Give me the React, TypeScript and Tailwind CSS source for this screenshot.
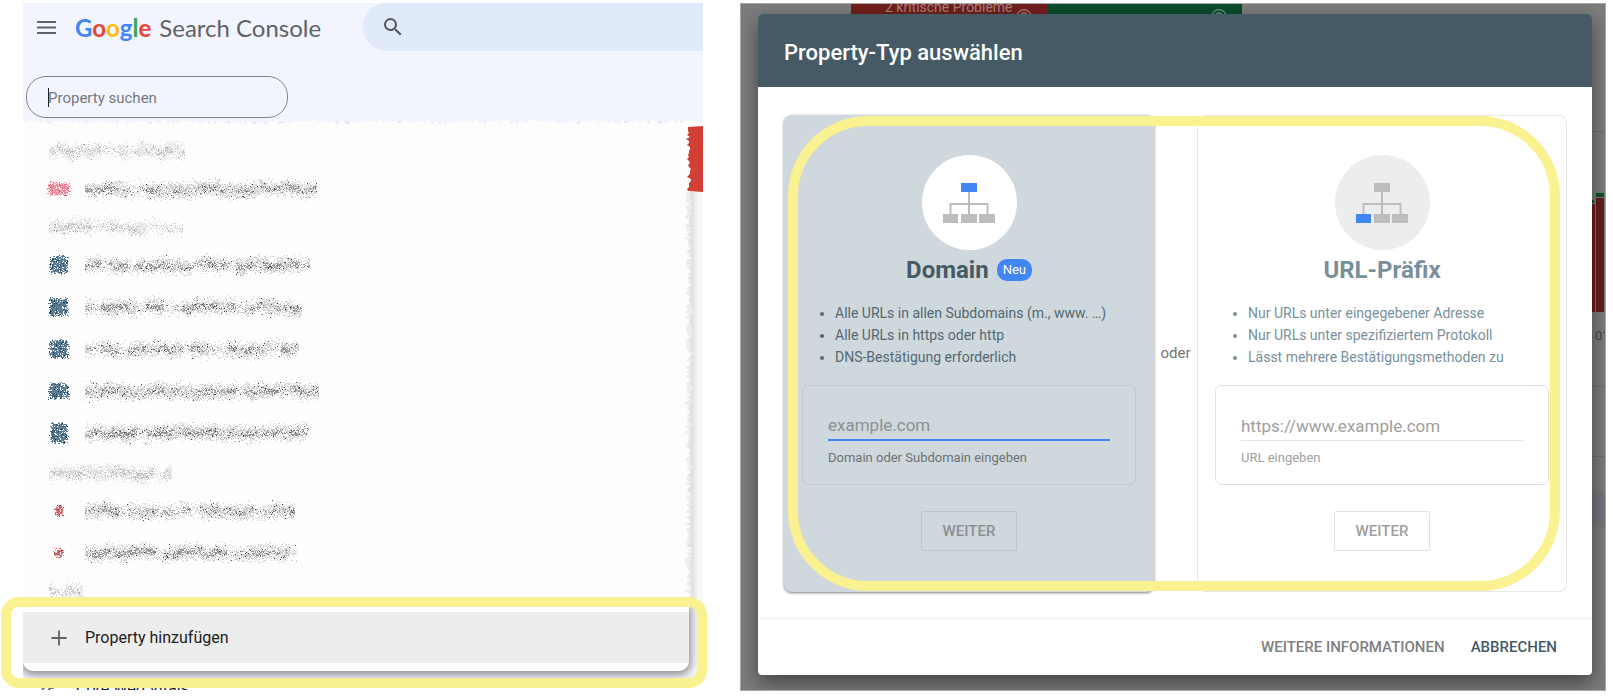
import React from 'react'
import { clsx } from 'clsx'

// ── Grain drawing helpers ──────────────────────────────────────────────────

const makeRandom = (seed: number) => {
  let s = seed * 7919 + 13
  return () => {
    s = (s * 1664525 + 1013904223) % 4294967296
    return s / 4294967296
  }
}

interface SmudgeProps {
  width: number
  seed: number
  tones: string[]
}

// Grainy stroke that covers a line of text
const Smudge: React.FC<SmudgeProps> = ({ width, seed, tones }) => {
  const rnd = makeRandom(seed)
  const paths = tones.map(() => '')
  let drift = 0
  let target = 0
  let weight = 0.8
  let dark = 0.5
  for (let x = 2; x < width - 2; x++) {
    if (x % 9 === 0) {
      target = (rnd() - 0.5) * 6
      weight = rnd() < 0.15 ? 0.3 : 0.7 + rnd() * 0.5
      dark = rnd()
    }
    drift += (target - drift) * 0.2
    const count = Math.round(13 * weight)
    for (let i = 0; i < count; i++) {
      const spread = (rnd() + rnd() + rnd() - 1.5) * 8
      const y = Math.round(12 + drift + spread)
      const near = Math.abs(spread) < 3
      const roll = rnd()
      const tone = roll > 0.97 ? 2 : near && roll < dark * 0.7 ? 1 : 0
      paths[tone] += `M${x} ${y}h1v1h-1z`
    }
  }
  return (
    <svg width={width} height={24} viewBox={`0 0 ${width} 24`} className="shrink-0" aria-hidden="true">
      {paths.map((d, i) => <path key={i} d={d} fill={tones[i]} />)}
    </svg>
  )
}

interface BlotProps {
  width: number
  height: number
  seed: number
  tones: string[]
}

// Grainy favicon
const Blot: React.FC<BlotProps> = ({ width, height, seed, tones }) => {
  const rnd = makeRandom(seed)
  const paths = tones.map(() => '')
  for (let i = 0; i < width * height * 2; i++) {
    const x = Math.round(11.5 + (rnd() - 0.5) * width + (rnd() - 0.5) * 4)
    const y = Math.round(11.5 + (rnd() - 0.5) * height + (rnd() - 0.5) * 4)
    const roll = rnd()
    paths[roll < 0.25 ? 0 : roll < 0.8 ? 1 : 2] += `M${x} ${y}h1v1h-1z`
  }
  return (
    <svg width={24} height={24} viewBox="0 0 24 24" className="shrink-0" aria-hidden="true">
      {[0, 2, 1].map(i => <path key={i} d={paths[i]} fill={tones[i]} />)}
    </svg>
  )
}

const raggedPoints = (seed: number, length: number, depth: number) => {
  const rnd = makeRandom(seed)
  const pts: [number, number][] = []
  for (let p = 0; p <= length; p += 2) pts.push([p, Math.round(rnd() * depth)])
  return pts
}

const TornTop = () => (
  <svg className="absolute left-0 -top-1 w-full h-2" viewBox="0 0 680 8" preserveAspectRatio="none" aria-hidden="true">
    <polygon points={`0,8 ${raggedPoints(5, 680, 3).map(([x, y]) => `${x},${y + 3}`).join(' ')} 680,8`} fill="#e3e5ee" />
    <polygon points={`0,8 ${raggedPoints(8, 680, 4).map(([x, y]) => `${x},${y + 2}`).join(' ')} 680,8`} fill="#fdfdfd" />
  </svg>
)

const TornSide = () => (
  <svg width={20} height={482} viewBox="0 0 20 482" className="shrink-0 bg-[#fdfdfd]" aria-hidden="true">
    <rect x={9} y={70} width={11} height={414} fill="#f8f8f8" />
    <polygon points={`14,70 ${raggedPoints(31, 414, 6).map(([y, x]) => `${x + 2},${y + 70}`).join(' ')} 14,484`} fill="#ededed" />
    <polygon points={`11,70 ${raggedPoints(77, 414, 5).map(([y, x]) => `${x + 5},${y + 70}`).join(' ')} 11,484`} fill="#e2e2e2" />
    <polygon points={`20,4 ${raggedPoints(3, 64, 5).map(([y, x]) => `${x + 3},${y + 5}`).join(' ')} 20,70`} fill="#d23f35" />
  </svg>
)

// ── Property list ──────────────────────────────────────────────────────────

const HEADING_TONES = ['#e2e2e2', '#c6c6c6', '#a2a2a2']
const TEXT_TONES = ['#d0d0d0', '#969696', '#4a4a4a']
const PINK_TONES = ['#f8c3cc', '#f08ba0', '#d8556e']
const BLUE_TONES = ['#8aa2b5', '#58788f', '#1d4564']
const RED_TONES = ['#eda5a5', '#d9666c', '#a33a40']

const GROUPS = [
  { heading: 140, items: [{ text: 236, width: 20, height: 11, tones: PINK_TONES }] },
  {
    heading: 138,
    items: [
      { text: 229, width: 16, height: 15, tones: BLUE_TONES },
      { text: 221, width: 17, height: 16, tones: BLUE_TONES },
      { text: 218, width: 17, height: 16, tones: BLUE_TONES },
      { text: 238, width: 18, height: 14, tones: BLUE_TONES },
      { text: 228, width: 15, height: 18, tones: BLUE_TONES },
    ],
  },
  {
    heading: 127,
    items: [
      { text: 214, width: 6, height: 8, tones: RED_TONES },
      { text: 216, width: 7, height: 7, tones: RED_TONES },
    ],
  },
  { heading: 38, items: [] },
]

const PropertyList = () => (
  <div className="flex-1 pt-3 pl-6 bg-[#fdfdfd]">
    {GROUPS.map((group, g) => (
      <div key={g} className={clsx(g === 2 && 'pt-0.5')}>
        <div className="flex items-center h-[34px]">
          <Smudge width={group.heading} seed={g + 40} tones={HEADING_TONES} />
        </div>
        {group.items.map((item, i) => (
          <div key={i} className="flex items-center gap-3 h-[42px]">
            <Blot width={item.width} height={item.height} seed={g * 10 + i + 1} tones={item.tones} />
            <Smudge width={item.text} seed={g * 10 + i + 60} tones={TEXT_TONES} />
          </div>
        ))}
      </div>
    ))}
  </div>
)

const GoogleLogo = () => (
  <span className="font-bold">
    <span className="text-[#4285f4]">G</span>
    <span className="text-[#ea4335]">o</span>
    <span className="text-[#fbbc05]">o</span>
    <span className="text-[#4285f4]">g</span>
    <span className="text-[#34a853]">l</span>
    <span className="text-[#ea4335]">e</span>
  </span>
)

const ConsolePanel = () => (
  <section className="relative flex flex-col">
    <header className="bg-[#f2f5fd]">
      <div className="flex h-12">
        <button type="button" aria-label="Menü" className="ml-[14px] flex items-center">
          <svg width={20} height={14} viewBox="0 0 20 14" className="mt-[2px]">
            <path d="M0 1h19M0 6.500h19M0 12h19" stroke="#5f6368" strokeWidth={1.800} />
          </svg>
        </button>
        <a href="#" className="flex flex-1 items-center gap-2 pl-[18px] pt-0.5 font-['Lato',sans-serif] text-2xl text-[#5f6368] whitespace-nowrap">
          <GoogleLogo />
          Search Console
        </a>
        <div className="flex w-1/2 items-center rounded-l-full bg-[#e0eafa] pl-[18px]">
          <svg width={24} height={24} viewBox="0 0 24 24" fill="#53575c" aria-hidden="true">
            <path d="M15.500 14h-.79l-.28-.27A6.471 6.471 0 0 0 16 9.500 6.500 6.500 0 1 0 9.500 16c1.610 0 3.090-.59 4.230-1.570l.27.28v.79l5 4.990L20.490 19l-4.990-5zm-6 0C7.010 14 5 11.990 5 9.500S7.010 5 9.500 5 14 7.010 14 9.500 11.990 14 9.500 14z" />
          </svg>
        </div>
      </div>
      <label className="relative ml-[3px] mt-[25px] mb-1 flex w-[262px] h-[42px] items-center rounded-[20px] border border-[#80858c] pl-[21px]">
        <span className="absolute left-[21px] h-[19px] w-px bg-[#202124]" />
        <input
          type="text"
          aria-label="Property suchen"
          placeholder="Property suchen"
          className="w-full bg-transparent pt-0.5 text-[15px] outline-none placeholder:text-[#75797d]"
        />
      </label>
    </header>

    <div className="relative flex h-[482px]">
      <TornTop />
      <PropertyList />
      <TornSide />
    </div>

    {/* Footer row of the drop-down */}
    <div className="relative overflow-hidden bg-[#f7f8fa] pb-[19px] pr-[14px]">
      <div className="relative z-10 rounded-b-[10px] bg-white pb-2 pt-2 shadow-[0_2px_10px_2px_rgba(60,65,80,0.6)]">
        <button type="button" className="flex h-[51px] w-full items-center gap-[18px] bg-[#ededed] pl-7 text-base text-[#212121]">
          <svg width={16} height={16} viewBox="0 0 16 16" aria-hidden="true">
            <path d="M8 .5v15M.5 8h15" stroke="#616161" strokeWidth={1.800} />
          </svg>
          Property hinzufügen
        </button>
      </div>
      <div className="absolute inset-x-0 bottom-0 z-20 flex h-[9px] gap-5 overflow-hidden bg-white pl-[17px] text-base leading-4 text-[#212121]">
        <svg width={16} height={16} viewBox="0 0 16 16" fill="none" stroke="#616161" strokeWidth={1.800} aria-hidden="true">
          <path d="M2 15a8 8 0 0 1 3-9M8 10a5 5 0 0 1 6-3" />
        </svg>
        Core Web Vitals
      </div>
    </div>

    <div className="pointer-events-none absolute -left-[22px] -right-1 bottom-[3px] z-30 h-[91px] rounded-[18px] border-10 border-[#faf190]" />
  </section>
)

// ── Property type dialog ───────────────────────────────────────────────────

const SitemapIcon = ({ active }: { active: 'root' | 'leaf' }) => (
  <svg width={52} height={40} viewBox="0 0 52 40" aria-hidden="true">
    <path d="M26 9v22M7.500 31V21h37v10" fill="none" stroke="#bdbdbd" strokeWidth={2} />
    <rect x={18} y={0} width={16} height={9} fill={active === 'root' ? '#4285f4' : '#bdbdbd'} />
    <rect x={0} y={31} width={15} height={9} fill={active === 'leaf' ? '#4285f4' : '#bdbdbd'} />
    <rect x={18} y={31} width={16} height={9} fill="#bdbdbd" />
    <rect x={36} y={31} width={16} height={9} fill="#bdbdbd" />
  </svg>
)

interface TypeCardProps {
  id: string
  title: string
  badge?: string
  points: string[]
  placeholder: string
  hint: string
  selected?: boolean
}

const TypeCard: React.FC<TypeCardProps> = ({ id, title, badge, points, placeholder, hint, selected }) => (
  <div
    className={clsx(
      'flex flex-col items-center rounded-lg px-[18px] pt-10 pb-[41px]',
      selected ? 'bg-[#cfd8dc] shadow-[0_1px_3px_rgba(0,0,0,0.5)]' : 'bg-white shadow-[inset_0_0_0_1px_#e8e8e8]',
    )}
  >
    <div className={clsx('flex size-[95px] items-center justify-center rounded-full', selected ? 'bg-white' : 'bg-[#ecedef]')}>
      <SitemapIcon active={selected ? 'root' : 'leaf'} />
    </div>

    <div className="flex h-10 items-center gap-2">
      <h2 className={clsx('text-2xl font-bold', selected ? 'text-[#455a64]' : 'text-[#78909c]')}>{title}</h2>
      {badge && <span className="rounded-[10px] bg-[#4285f4] px-1.5 text-[13px] leading-[22px] text-white">{badge}</span>}
    </div>

    <ul
      className={clsx(
        'mt-3 w-full list-disc pl-[33px] text-sm leading-[22px] whitespace-nowrap',
        selected ? 'text-[#546872]' : 'text-[#78909c]',
      )}
    >
      {points.map(point => <li key={point}>{point}</li>)}
    </ul>

    <div className={clsx('mt-[17px] h-[100px] w-full rounded-md border px-[25px] pt-[25px]', selected ? 'border-[#bfc8cc]' : 'border-[#e2e2e2]')}>
      <input
        id={id}
        type="text"
        placeholder={placeholder}
        className={clsx(
          'block h-[30px] w-full bg-transparent text-[17px] outline-none',
          selected
            ? 'border-b-2 border-[#4285f4] placeholder:text-[#8b9193]'
            : 'border-b border-[#e5e5e5] placeholder:text-[#9e9e9e]',
        )}
      />
      <label htmlFor={id} className={clsx('mt-[7px] block text-[13px] leading-5', selected ? 'text-[#6c7275]' : 'text-[#a0a0a0]')}>
        {hint}
      </label>
    </div>

    <button
      type="button"
      className={clsx(
        'mt-[26px] h-10 rounded-xs border px-[21px] text-[15px] font-medium',
        selected ? 'border-[#bcc5c9] text-[#8a9194]' : 'border-[#e2e2e2] text-[#a0a0a0]',
      )}
    >
      WEITER
    </button>
  </div>
)

const HelpRing = () => (
  <svg width={16} height={16} viewBox="0 0 16 16" fill="none" stroke="currentColor" className="absolute right-[15px] top-[5px]" aria-hidden="true">
    <circle cx={8} cy={8} r={7.300} strokeWidth={1.200} />
    <path d="M5 7a3 3 0 1 1 4.500 2.500L8 11" strokeWidth={1.300} />
  </svg>
)

// Dimmed report page that shows through at the right edge
const BackdropChart = () => (
  <svg width={14} height={687} viewBox="0 0 14 687" className="absolute right-0 top-0" aria-hidden="true">
    <path d="M0 127.500h14M0 382.500h14M0 452.500h14" stroke="#6d6d6d" />
    <rect x={0} y={487} width={14} height={36} fill="#74767b" />
    <rect x={0} y={200} width={4} height={108} fill="#641f1c" />
    <rect x={0} y={196} width={3} height={3} fill="#12502f" />
    <rect x={5} y={194} width={8} height={114} fill="#641f1c" />
    <rect x={5} y={189} width={8} height={4} fill="#12502f" />
    <text x={4} y={336} fontSize={13} fill="#444">01</text>
  </svg>
)

const DialogPanel = () => (
  <section className="relative overflow-hidden border border-[#a8a8a8] bg-[#7c7c7d] pl-[17px] pr-[13px] pt-[10px] pb-[15px]">
    <div className="absolute left-[110px] right-[363px] top-0 grid h-4 grid-cols-2">
      <div className="relative overflow-hidden bg-[#701f1c] text-center text-sm leading-3 text-[#a97f7d]">
        <div className="-mt-[5px] leading-4">2 kritische Probleme</div>
        <HelpRing />
      </div>
      <div className="relative overflow-hidden bg-[#0b4b2c] text-[#6f9580]">
        <HelpRing />
      </div>
    </div>
    <BackdropChart />

    <div role="dialog" aria-labelledby="dialog-title" className="relative rounded-sm bg-white shadow-[0_8px_20px_rgba(0,0,0,0.45)]">
      <h1 id="dialog-title" className="flex h-[73px] items-center rounded-t-sm bg-[#455a64] pl-[26px] pt-1 text-[22px] font-medium text-white">
        Property-Typ auswählen
      </h1>

      <div className="relative grid grid-cols-[1fr_43px_1fr] border-b border-[#eeeeee] pt-7 pb-[26px] pl-[26px] pr-[25px]">
        <TypeCard
          id="domain"
          title="Domain"
          badge="Neu"
          points={['Alle URLs in allen Subdomains (m., www. …)', 'Alle URLs in https oder http', 'DNS-Bestätigung erforderlich']}
          placeholder="example.com"
          hint="Domain oder Subdomain eingeben"
          selected
        />
        <div className="flex items-center justify-center text-[15px] text-[#757575]">oder</div>
        <TypeCard
          id="url-prefix"
          title="URL-Präfix"
          points={['Nur URLs unter eingegebener Adresse', 'Nur URLs unter spezifiziertem Protokoll', 'Lässt mehrere Bestätigungsmethoden zu']}
          placeholder="https://www.example.com"
          hint="URL eingeben"
        />
        <div className="pointer-events-none absolute left-[30px] right-8 top-[29px] bottom-[27px] rounded-[80px] border-10 border-[#faf190]" />
      </div>

      <div className="flex h-14 items-center justify-end gap-[26px] pr-[35px] text-[15px] font-medium">
        <a href="#" className="text-[#808080]">WEITERE INFORMATIONEN</a>
        <button type="button" className="text-[#455a64]">ABBRECHEN</button>
      </div>
    </div>
  </section>
)

export default function App() {
  return (
    <main className="grid grid-cols-[680fr_866fr] gap-[37px] bg-white pl-[23px] pr-[7px] pt-[3px] pb-[6px] font-['Roboto',sans-serif]">
      <ConsolePanel />
      <DialogPanel />
    </main>
  )
}
